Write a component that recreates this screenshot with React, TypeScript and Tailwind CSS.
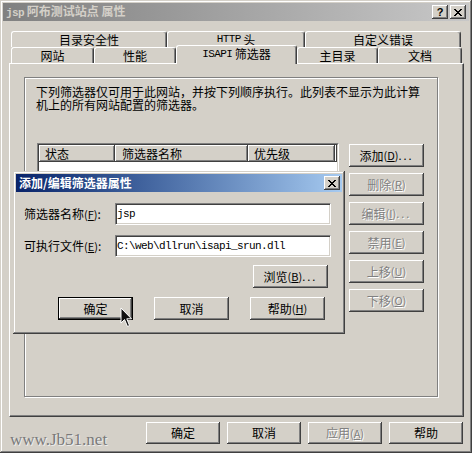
import React from 'react';

const raised = 'shadow-[inset_-1px_-1px_#404040,inset_1px_1px_#ffffff,inset_-2px_-2px_#808080]';
const disabledText = 'text-[#808080] [text-shadow:1px_1px_0_#ffffff]';

const Mono: React.FC<{ children: React.ReactNode; bold?: boolean }> = ({ children, bold }) => (
  <span className={`font-['Liberation_Mono',monospace] text-[11px] tracking-[-0.6px] ${bold ? 'font-bold' : ''}`}>{children}</span>
);

// mnemonic letter, e.g. (D)
const Key: React.FC<{ k: string }> = ({ k }) => (
  <span className="text-[11px]">
    (<span className="underline underline-offset-1">{k}</span>)
  </span>
);

const Btn: React.FC<{
  children: React.ReactNode;
  className?: string;
  disabled?: boolean;
  def?: boolean;
}> = ({ children, className = 'w-[75px] h-[23px]', disabled, def }) => (
  <div className={`${className} ${def ? 'border border-black' : ''} bg-[#d4d0c8]`}>
    <div className={`w-full h-full flex items-center justify-center ${raised} ${disabled ? disabledText : ''}`}>
      {children}
    </div>
  </div>
);

const Tab: React.FC<{ label: React.ReactNode; className: string }> = ({ label, className }) => (
  <div
    className={`${className} flex items-center justify-center bg-[#d4d0c8] border-t border-l border-white border-r border-r-[#404040] rounded-t-[3px] shadow-[inset_-1px_0_#808080]`}
  >
    {label}
  </div>
);

const CloseGlyph = () => (
  <svg width="8" height="7" viewBox="0 0 8 7" shapeRendering="crispEdges">
    <path
      fill="#000"
      d="M0 0h2v1h-2z M6 0h2v1h-2z M1 1h2v1h-2z M5 1h2v1h-2z M2 2h4v1h-4z M3 3h2v1h-2z M2 4h4v1h-4z M1 5h2v1h-2z M5 5h2v1h-2z M0 6h2v1h-2z M6 6h2v1h-2z"
    />
  </svg>
);

const CaptionBtn: React.FC<{ children: React.ReactNode }> = ({ children }) => (
  <div className={`w-[16px] h-[14px] bg-[#d4d0c8] flex items-center justify-center ${raised}`}>{children}</div>
);

const Input: React.FC<{ children: React.ReactNode }> = ({ children }) => (
  <div className="w-[216px] h-[22px] bg-white border border-t-[#808080] border-l-[#808080] border-b-white border-r-white">
    <div className="w-full h-full flex items-center pl-[1px] shadow-[inset_1px_1px_#404040,inset_-1px_-1px_#d4d0c8]">
      {children}
    </div>
  </div>
);

const App: React.FC = () => {
  const sideButtons = [
    { label: '添加', k: 'D', dots: true, disabled: false },
    { label: '删除', k: 'R', dots: false, disabled: true },
    { label: '编辑', k: 'I', dots: true, disabled: true },
    { label: '禁用', k: 'E', dots: false, disabled: true },
    { label: '上移', k: 'U', dots: false, disabled: true },
    { label: '下移', k: 'O', dots: false, disabled: true },
  ];

  return (
    <div className="relative w-[472px] h-[453px] overflow-hidden bg-[#d4d0c8] text-black text-[12px] leading-none font-['Noto_Sans_CJK_SC','Noto_Sans_CJK_JP',sans-serif] shadow-[inset_-1px_-1px_#404040,inset_1px_1px_#d4d0c8,inset_-2px_-2px_#808080,inset_2px_2px_#ffffff]">
      {/* title bar (inactive) */}
      <div className="mx-[3px] mt-[3px] h-[18px] flex items-center pl-[3px] pr-[3px] bg-linear-to-r from-[#808080] to-[#c8c8c8]">
        <span className="font-bold text-[#d4d0c8] text-[12px]">
          <Mono bold>jsp</Mono> 阿布测试站点 属性
        </span>
        <div className="ml-auto flex gap-[2px]">
          <CaptionBtn>
            <span className="font-['Liberation_Sans',sans-serif] font-bold text-[11px]">?</span>
          </CaptionBtn>
          <CaptionBtn>
            <CloseGlyph />
          </CaptionBtn>
        </div>
      </div>

      {/* tabs */}
      <div className="mt-[10px] ml-[11px]">
        <div className="flex h-[16px]">
          <Tab className="w-[156px] h-[16px]" label="目录安全性" />
          <Tab className="w-[138px] h-[16px]" label={<><Mono>HTTP</Mono>&nbsp;头</>} />
          <Tab className="w-[156px] h-[16px]" label="自定义错误" />
        </div>
        <div className="flex h-[16px] items-end">
          <Tab className="w-[83px] h-[16px]" label="网站" />
          <Tab className="w-[82px] h-[16px]" label="性能" />
          <Tab className="w-[121px] h-[19px] -mb-[1px] relative z-10 pb-[2px]" label={<><Mono>ISAPI</Mono>&nbsp;筛选器</>} />
          <Tab className="w-[81px] h-[16px]" label="主目录" />
          <Tab className="w-[84px] h-[16px]" label="文档" />
        </div>
      </div>

      {/* tab panel */}
      <div className="ml-[9px] w-[455px] h-[354px] pl-[14px] pt-[13px] border-l border-t border-white border-r border-b border-r-[#404040] border-b-[#404040] shadow-[inset_-1px_-1px_#808080]">
        <div className="w-[414px] h-[320px] border border-[#808080] shadow-[inset_1px_1px_#ffffff,1px_1px_#ffffff]">
          <p className="pl-[11px] pt-[7px] leading-[13px]">
            下列筛选器仅可用于此网站，并按下列顺序执行。此列表不显示为此计算
            <br />
            机上的所有网站配置的筛选器。
          </p>
          <div className="flex mt-[32px] ml-[12px]">
            <div className="w-[302px] h-[186px] border border-t-[#808080] border-l-[#808080] border-b-white border-r-white">
              <div className="w-full h-full bg-white border border-t-[#404040] border-l-[#404040] border-b-[#d4d0c8] border-r-[#d4d0c8]">
                <div className="flex h-[17px] bg-[#d4d0c8]">
                  <div className={`w-[76px] flex items-center pl-[6px] ${raised}`}>状态</div>
                  <div className={`w-[133px] flex items-center pl-[7px] ${raised}`}>筛选器名称</div>
                  <div className={`w-[87px] flex items-center pl-[6px] ${raised}`}>优先级</div>
                  <div className={`flex-1 ${raised}`} />
                </div>
              </div>
            </div>
            <div className="ml-[10px] pt-[1px] flex flex-col gap-[6px]">
              {sideButtons.map((b) => (
                <Btn key={b.label} disabled={b.disabled}>
                  {b.label}
                  <Key k={b.k} />
                  {b.dots && <span className="tracking-[2px] text-[11px]">...</span>}
                </Btn>
              ))}
            </div>
          </div>
        </div>
      </div>

      {/* bottom row */}
      <div className="flex mt-[5px]">
        <div className="ml-[10px] mt-[9px] leading-[17px] font-['Liberation_Serif',serif] text-[17px] text-[#7a7a7a] [text-shadow:1px_1px_0_#eeeeee]">
          www.Jb51.net
        </div>
        <div className="ml-auto mr-[9px] flex gap-[7px]">
          <Btn className="w-[74px] h-[22px]">确定</Btn>
          <Btn className="w-[74px] h-[22px]">取消</Btn>
          <Btn className="w-[74px] h-[22px]" disabled>
            应用<Key k="A" />
          </Btn>
          <Btn className="w-[74px] h-[22px]">帮助</Btn>
        </div>
      </div>

      {/* add/edit filter dialog, over the property sheet */}
      <div className="absolute left-[13px] top-[171px] w-[332px] h-[163px] p-[3px] bg-[#d4d0c8] shadow-[inset_-1px_-1px_#404040,inset_1px_1px_#d4d0c8,inset_-2px_-2px_#808080,inset_2px_2px_#ffffff]">
        <div className="h-[18px] flex items-center pl-[3px] pr-[2px] bg-linear-to-r from-[#0a246a] to-[#a6caf0]">
          <span className="font-bold text-white text-[12px]">添加/编辑筛选器属性</span>
          <div className="ml-auto">
            <CaptionBtn>
              <CloseGlyph />
            </CaptionBtn>
          </div>
        </div>
        <div className="mt-[11px] flex items-center h-[22px] pl-[8px]">
          <div className="w-[91px]">
            筛选器名称<Key k="F" />:
          </div>
          <Input>
            <Mono>jsp</Mono>
          </Input>
        </div>
        <div className="mt-[10px] flex items-center h-[22px] pl-[8px]">
          <div className="w-[91px]">
            可执行文件<Key k="E" />:
          </div>
          <Input>
            <Mono>C:\web\dllrun\isapi_srun.dll</Mono>
          </Input>
        </div>
        <div className="mt-[8px] flex justify-end pr-[14px]">
          <Btn>
            浏览<Key k="B" />
            <span className="tracking-[2px] text-[11px]">...</span>
          </Btn>
        </div>
        <div className="mt-[9px] flex pl-[42px] gap-[21px]">
          <Btn def>确定</Btn>
          <Btn>取消</Btn>
          <Btn>
            帮助<Key k="H" />
          </Btn>
        </div>
      </div>

      {/* mouse pointer */}
      <svg className="absolute left-[120px] top-[307px]" width="14" height="21" viewBox="0 0 14 21">
        <path d="M1 1 L1 16 L4.5 12.5 L7.5 19.5 L9.5 18.5 L6.8 11.8 L11.5 11.8 Z" fill="#111" stroke="#ffffff" strokeWidth="1" />
      </svg>
    </div>
  );
};

export default App;
